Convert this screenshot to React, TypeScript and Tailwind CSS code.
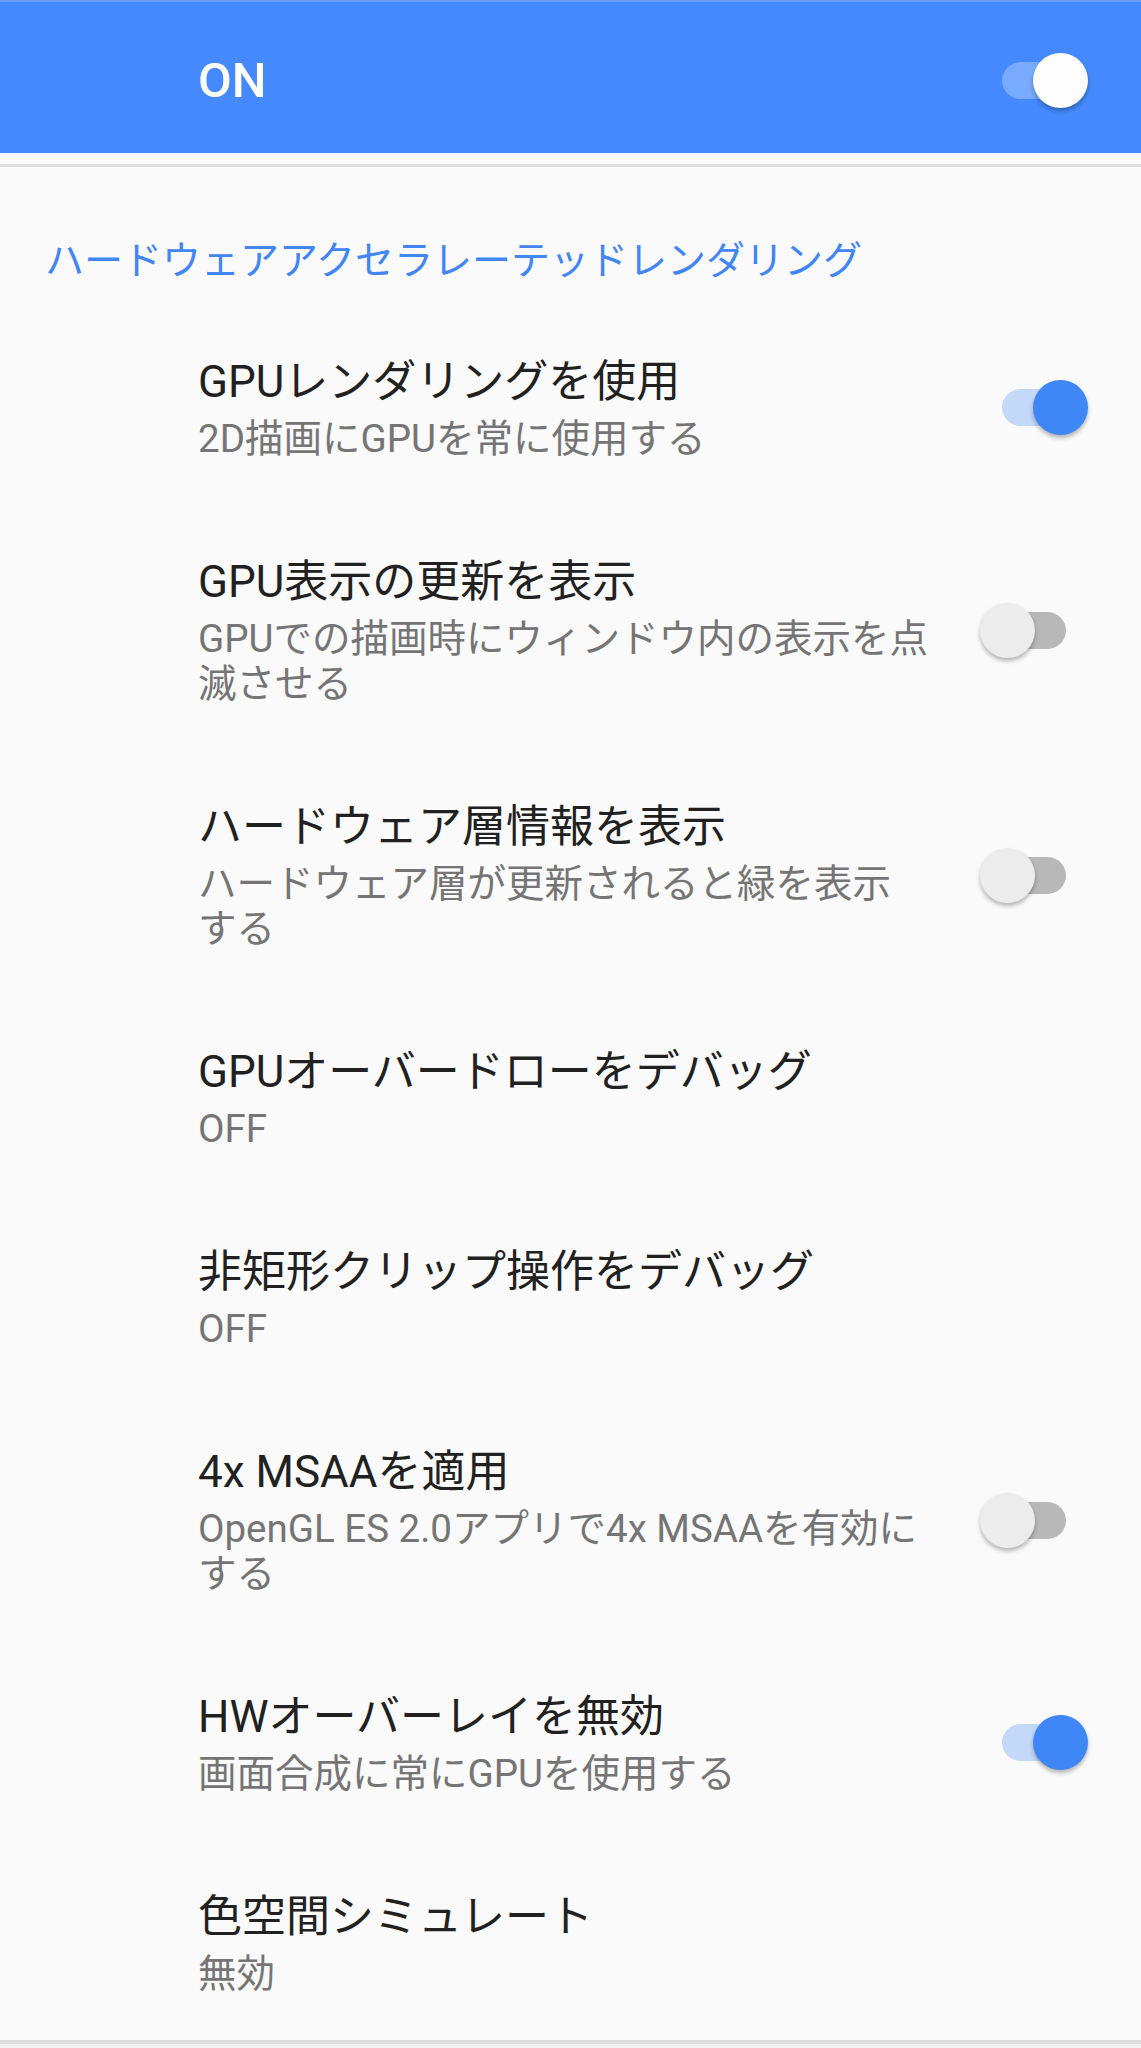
import React from "react";

type Item = {
  title: string;
  sub: React.ReactNode;
  toggle?: "on" | "off";
};

const items: Item[] = [
  { title: "GPUレンダリングを使用", sub: "2D描画にGPUを常に使用する", toggle: "on" },
  {
    title: "GPU表示の更新を表示",
    sub: (
      <>
        GPUでの描画時にウィンドウ内の表示を点
        <br />
        滅させる
      </>
    ),
    toggle: "off",
  },
  {
    title: "ハードウェア層情報を表示",
    sub: (
      <>
        ハードウェア層が更新されると緑を表示
        <br />
        する
      </>
    ),
    toggle: "off",
  },
  { title: "GPUオーバードローをデバッグ", sub: "OFF" },
  { title: "非矩形クリップ操作をデバッグ", sub: "OFF" },
  {
    title: "4x MSAAを適用",
    sub: (
      <>
        OpenGL ES 2.0アプリで4x MSAAを有効に
        <br />
        する
      </>
    ),
    toggle: "off",
  },
  { title: "HWオーバーレイを無効", sub: "画面合成に常にGPUを使用する", toggle: "on" },
  { title: "色空間シミュレート", sub: "無効" },
];

function Switch({ on, header }: { on: boolean; header?: boolean }) {
  const track = header
    ? "bg-[#78abff]"
    : on
    ? "bg-[#c4d8fa]"
    : "bg-[#b8b8b8]";
  const thumb = header
    ? "bg-[#fdfdfd]"
    : on
    ? "bg-[#3f86f7]"
    : "bg-[#ececec]";
  return (
    <div className="relative w-[108px] h-[55px] shrink-0">
      <div className={`absolute left-[22px] top-[9px] w-[64px] h-[37px] rounded-full ${track}`} />
      <div
        className={`absolute top-0 w-[55px] h-[55px] rounded-full shadow-[0_3px_4px_rgba(0,0,0,0.28)] ${thumb} ${
          on ? "left-[53px]" : "left-0"
        }`}
      />
    </div>
  );
}

export default function App() {
  return (
    <div className="w-[1141px] h-[2048px] overflow-hidden bg-[#fafafa] font-[family-name:Roboto,'Noto_Sans_CJK_JP',sans-serif]">
      {/* Header bar */}
      <div className="bg-[#4489fd]">
        <div className="h-[2px] bg-[#6c9ff4]" />
        <div className="h-[151px] flex items-center pl-[198px] pr-[53px] pt-[6px]">
          <div className="flex-1 text-white text-[49px] leading-[56px] font-medium">ON</div>
          <Switch on header />
        </div>
      </div>
      <div className="h-[11px] bg-[#fbfbfb]" />
      <div className="h-[3px] bg-[#dedede]" />

      {/* Category */}
      <div className="pl-[45px] pt-[71px] pb-[23px] text-[39px] leading-[46px] text-[#4285f4]">
        ハードウェアアクセラレーテッドレンダリング
      </div>

      {/* Items */}
      <div className="flex flex-col">
        {items.map((it, i) => (
          <div
            key={i}
            className={`flex items-center pl-[198px] pr-[53px] pt-[47px] ${
              i === items.length - 1 ? "pb-[44px]" : "pb-[46px]"
            }`}
          >
            <div className="flex-1 min-w-0 flex flex-col gap-[6px]">
              <div className="text-[44px] leading-[56px] text-[#212121] whitespace-nowrap">{it.title}</div>
              <div className="text-[38.5px] leading-[45px] text-[#757575] whitespace-nowrap">{it.sub}</div>
            </div>
            {it.toggle && <Switch on={it.toggle === "on"} />}
          </div>
        ))}
      </div>
      <div className="h-[4px] bg-[#dedede]" />
      <div className="h-[20px] bg-[#f3f3f3]" />
    </div>
  );
}
